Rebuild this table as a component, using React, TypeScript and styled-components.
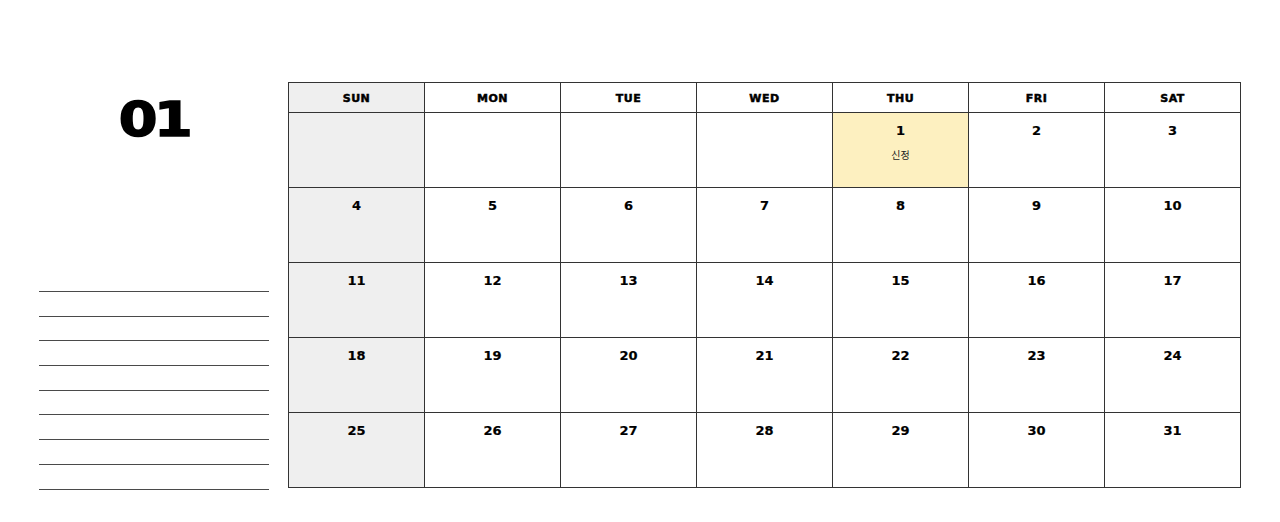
import React from "react";
import styled, { createGlobalStyle } from "styled-components";

const GlobalStyle = createGlobalStyle`
  body {
    margin: 0;
    background: #ffffff;
    font-family: "DejaVu Sans", "Noto Sans CJK KR", sans-serif;
  }
`;

const Page = styled.div`
  width: 1280px;
  height: 522px;
  display: flex;
  background: #fff;
`;

const Side = styled.div`
  width: 230px;
  padding: 93px 19px 0 39px;
  display: flex;
  flex-direction: column;
`;

const Month = styled.div`
  text-align: center;
  font-family: "DejaVu Sans", sans-serif;
  font-weight: 900;
  font-size: 48px;
  line-height: 52px;
  letter-spacing: -3px;
  color: #000;
  transform: scaleX(1.16);
  -webkit-text-stroke: 1.5px #000;
`;

const Lines = styled.div`
  margin-top: 146px;
  display: flex;
  flex-direction: column;
  gap: 23.7px;
`;

const Line = styled.div`
  height: 1px;
  background: #4a4a4a;
`;

const Board = styled.div`
  margin-top: 82px;
  width: 952px;
  display: grid;
  grid-template-columns: repeat(7, 1fr);
  grid-template-rows: 30px repeat(5, 75px);
  border-top: 1px solid #333;
  border-left: 1px solid #333;
  align-self: flex-start;
`;

const Head = styled.div<{ $sun?: boolean }>`
  border-right: 1px solid #333;
  border-bottom: 1px solid #333;
  background: ${p => (p.$sun ? "#efefef" : "#fff")};
  display: flex;
  align-items: center;
  justify-content: center;
  padding-top: 2px;
  font-family: "DejaVu Sans", sans-serif;
  font-weight: 700;
  font-size: 11px;
  letter-spacing: 0.5px;
  color: #000;
  -webkit-text-stroke: 0.5px #000;
`;

const Cell = styled.div<{ $sun?: boolean; $mark?: boolean }>`
  border-right: 1px solid #333;
  border-bottom: 1px solid #333;
  background: ${p => (p.$mark ? "#fdf0c0" : p.$sun ? "#efefef" : "#fff")};
  display: flex;
  flex-direction: column;
  align-items: center;
  padding-top: 10px;
`;

const Day = styled.div`
  font-family: "DejaVu Sans", sans-serif;
  font-weight: 700;
  font-size: 13px;
  line-height: 15px;
  color: #000;
  -webkit-text-stroke: 0.2px #000;
`;

const Note = styled.div`
  margin-top: 11px;
  font-family: "Noto Sans CJK KR", sans-serif;
  font-size: 10px;
  line-height: 12px;
  color: #222;
`;

const days = ["SUN", "MON", "TUE", "WED", "THU", "FRI", "SAT"];

export default function App() {
  const cells: (number | null)[] = [null, null, null, null];
  for (let d = 1; d <= 31; d++) cells.push(d);

  return (
    <Page>
      <GlobalStyle />
      <Side>
        <Month>01</Month>
        <Lines>
          {Array.from({ length: 9 }).map((_, i) => (
            <Line key={i} />
          ))}
        </Lines>
      </Side>
      <Board>
        {days.map((d, i) => (
          <Head key={d} $sun={i === 0}>{d}</Head>
        ))}
        {cells.map((d, i) => (
          <Cell key={i} $sun={i % 7 === 0} $mark={d === 1}>
            {d && <Day>{d}</Day>}
            {d === 1 && <Note>신정</Note>}
          </Cell>
        ))}
      </Board>
    </Page>
  );
}
